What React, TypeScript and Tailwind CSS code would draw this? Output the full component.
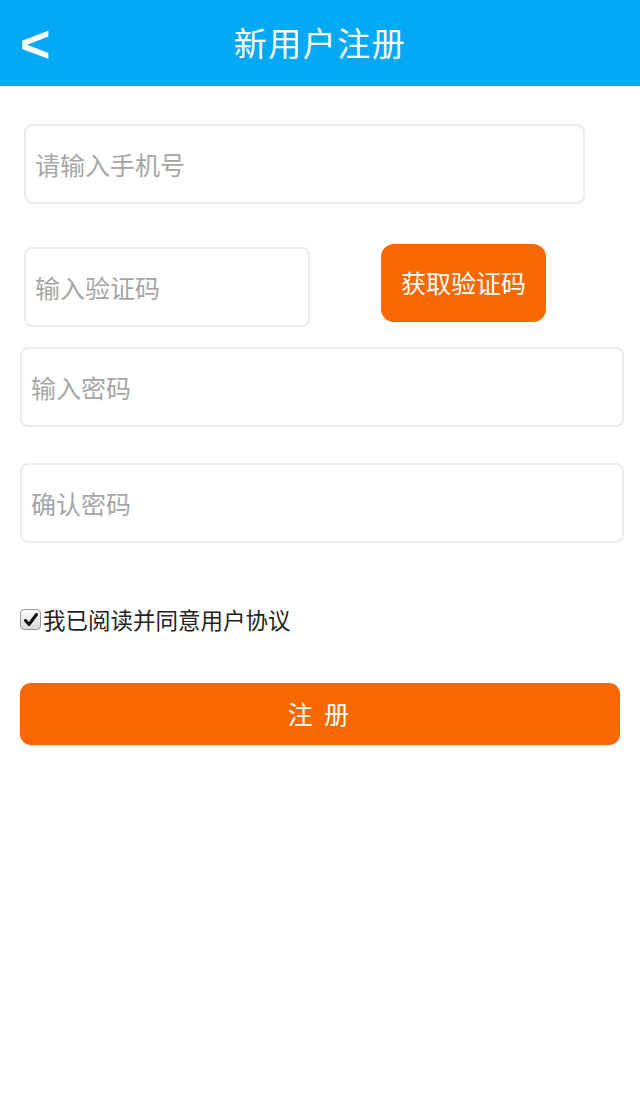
import React, { useState } from 'react'

const font = { fontFamily: '"Noto Sans CJK SC", "Noto Sans", sans-serif' }

const Field = ({ placeholder, className }: { placeholder: string; className: string }) => (
    <div className={`h-[80px] rounded-[8px] border-2 border-[#ececec] bg-white flex items-center ${className}`}>
        <input
            placeholder={placeholder}
            className="w-full h-full bg-transparent outline-none px-[9px] text-[25px] text-[#333] placeholder:text-[#a6a6a6]"
            style={font}
        />
    </div>
)

const App = () => {
    const [agree, setAgree] = useState(true)
    return (
        <div className="w-[640px] min-h-[1096px] bg-white" style={font}>
            <div className="relative h-[86px] bg-[#04a9f5] flex items-center justify-center">
                <span className="absolute left-[20px] top-[18px] text-white text-[52px] leading-none font-bold" style={{ fontFamily: '"Liberation Sans", sans-serif' }}>&lt;</span>
                <h1 className="text-white text-[33px] font-normal tracking-[1.5px]">新用户注册</h1>
            </div>

            <div className="pt-[38px]">
                <Field placeholder="请输入手机号" className="ml-[24px] w-[561px]" />

                <div className="flex items-start mt-[42px]">
                    <Field placeholder="输入验证码" className="ml-[24px] w-[286px] mt-[1px]" />
                    <button className="ml-[71px] w-[165px] h-[78px] rounded-[13px] bg-[#f76800] text-white text-[25px] -mt-[2px]" style={font}>
                        获取验证码
                    </button>
                </div>

                <Field placeholder="输入密码" className="ml-[20px] w-[604px] mt-[20px]" />
                <Field placeholder="确认密码" className="ml-[20px] w-[604px] mt-[36px]" />

                <label className="flex items-center ml-[20px] mt-[60px] cursor-pointer select-none">
                    <span
                        onClick={() => setAgree(!agree)}
                        className="w-[21px] h-[21px] rounded-[4px] border border-[#9a9a9a] bg-gradient-to-b from-[#fdfdfd] to-[#d9d9d9] flex items-center justify-center"
                    >
                        {agree && (
                            <svg width="16" height="16" viewBox="0 0 16 16">
                                <path d="M2.5 8.5 L6 12.5 L13.5 2.5" fill="none" stroke="#111" strokeWidth="3" strokeLinecap="round" strokeLinejoin="round" />
                            </svg>
                        )}
                    </span>
                    <span className="ml-[2px] text-[22.5px] text-[#222]">我已阅读并同意用户协议</span>
                </label>

                <button className="block ml-[20px] mt-[46px] w-[600px] h-[62px] rounded-[11px] bg-[#f76800] text-white text-[25px] tracking-[3px]" style={font}>
                    注 册
                </button>
            </div>
        </div>
    )
}

export default App
